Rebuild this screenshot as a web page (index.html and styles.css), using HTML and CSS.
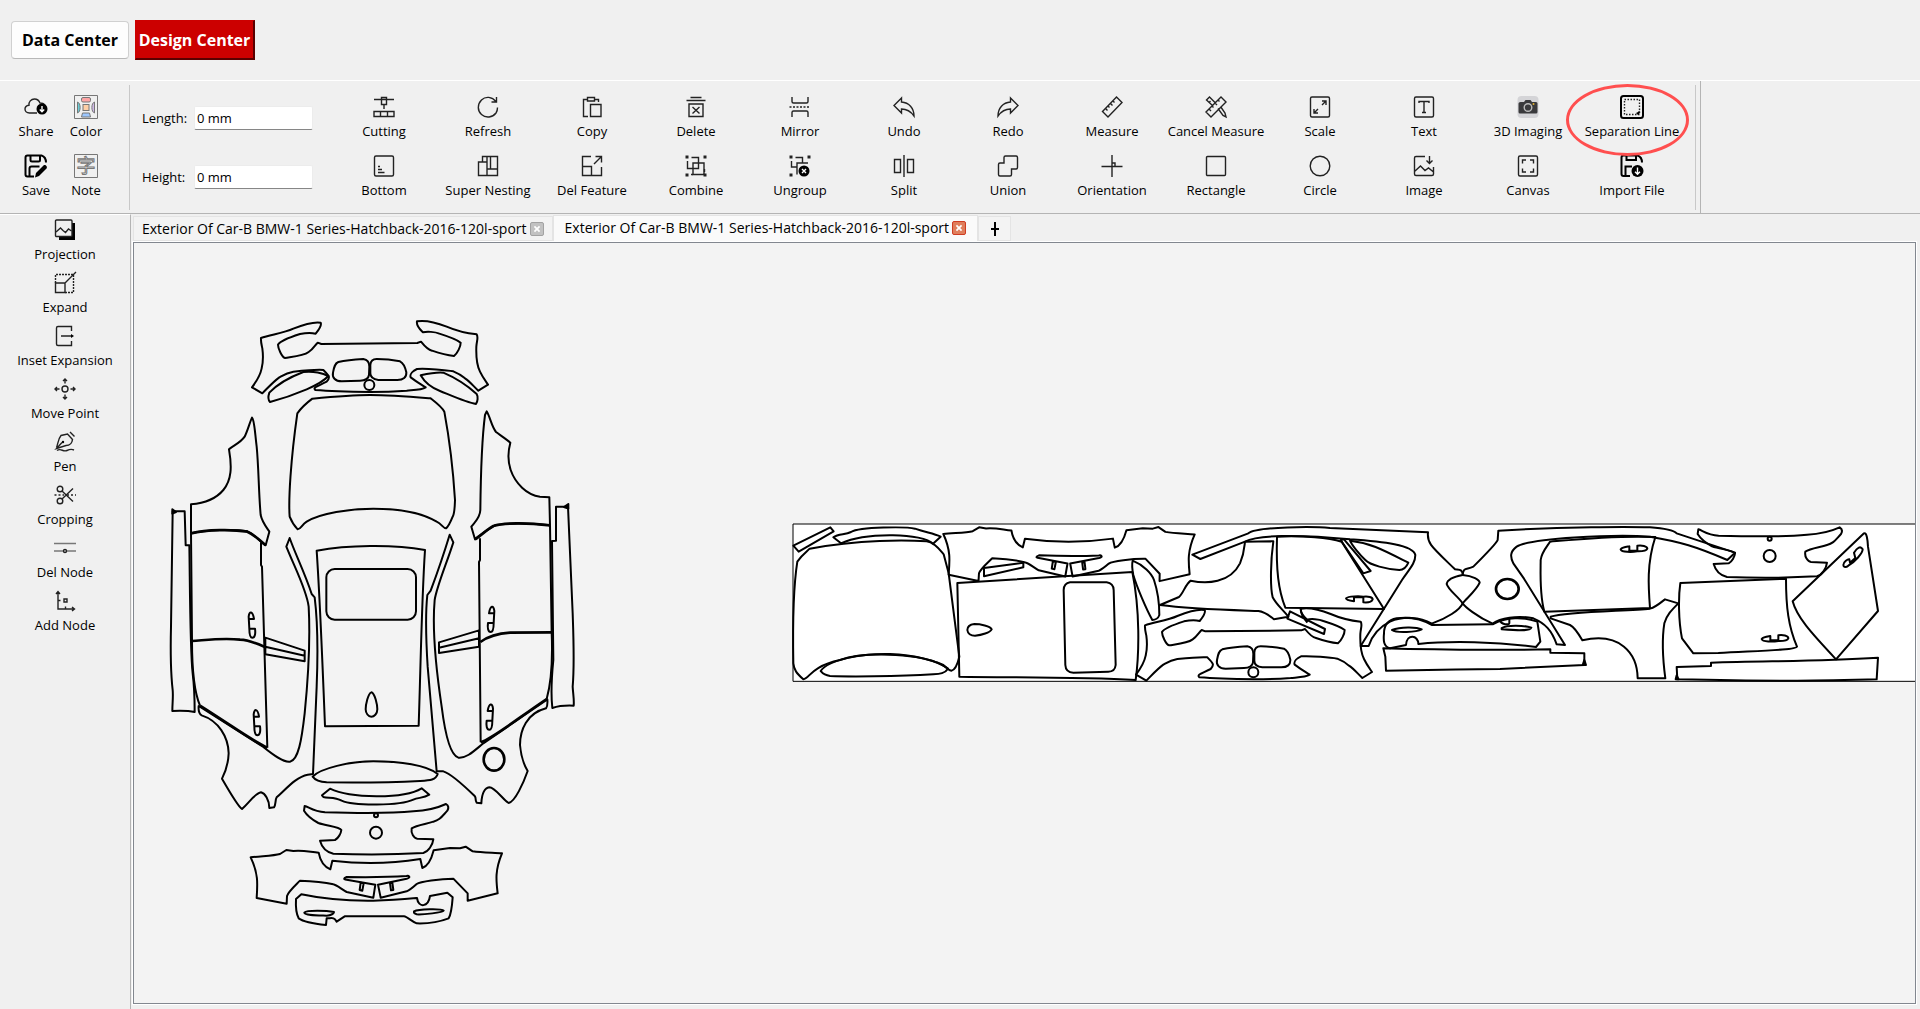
FILE: index.html
```html
<!DOCTYPE html>
<html lang="en">

<head>
    <meta charset="UTF-8">
    <meta name="viewport" content="width=device-width, initial-scale=1.0">
    <title>Design Center</title>
    <link rel="stylesheet" href="styles.css">
</head>

<body>
    <!-- Icon sprite -->
    <svg class="sprite" aria-hidden="true">
        <symbol id="i-share" viewBox="0 0 24 24"><path d="M13 18H5.5C2.500 18 1 16 1 14C1 12 2.500 10.500 5 10.200C4.500 7 7 4 10.500 4C13.500 4 15 5.500 16 8C18.500 8 20.500 9 21.500 11"/><circle cx="18" cy="14" r="5.500" class="solid"/><path class="inv" d="M18 11V16.500M15.800 14.500L18 16.700L20.200 14.500"/></symbol>
        <symbol id="i-color" viewBox="0 0 24 24"><g class="thin"><path stroke="#777" d="M.5 .5H23.500V23.500H.5Z"/><rect x="7.500" y="2.500" width="9" height="4.500" rx="1.500" fill="#ffa5a5"/><rect x="9" y="9.500" width="6" height="6" fill="#ffcfa6"/><path fill="#9cc7ff" d="M8.500 18H15.500L16.500 22H7.500Z"/><path fill="#69cbd4" d="M3.500 7C7 8 7 17 3.500 18Z"/><path fill="#d0b9e8" d="M20.500 7C17 8 17 17 20.500 18Z"/></g></symbol>
        <symbol id="i-save" viewBox="0 0 24 24"><g class="bold"><path d="M10 22.500H3.500C2 22.500 1.500 22 1.500 20.500V3.500C1.500 2 2 1.500 3.500 1.500H17.500C20.500 2.500 22 5 22 8.500M6.500 2V6C6.500 7 7 7.500 8 7.500H14.500C15.500 7.500 16 7 16 6V2M5.500 22V14.500C5.500 13 6 12.500 7.500 12.500H15.500"/></g><path class="solid" d="M12 19L19.500 11.500C21 10 24 12.500 22.500 14.500L15 22L11 23.500Z"/></symbol>
        <symbol id="i-cutting" viewBox="0 0 24 24"><path d="M2 4.500H22M9.500 2.500H14.500V9.500H9.500ZM12 9.500V14M2 16.500H22V21.500H2ZM8.500 16.500V21.500M15.500 16.500V21.500"/></symbol>
        <symbol id="i-refresh" viewBox="0 0 24 24"><path d="M20 6.500C16 1.500 9.500 1 5.500 5C1 9.500 1.500 16 5.500 19.500C10 23.500 16.500 22.500 20 18C21 16.500 21.500 14.500 21.500 12.500M20.500 2V7H15.500"/></symbol>
        <symbol id="i-copy" viewBox="0 0 24 24"><path d="M8 21.500H3.500V4.500H7.500M7.500 2.500H14.500V6H7.500ZM14.500 4.500H18.500V7M10.500 9.500H21V21.500H10.500Z"/></symbol>
        <symbol id="i-delete" viewBox="0 0 24 24"><path d="M6.500 2.500H17.500M2.500 5.500H21.500M5 9H19V21.500H5ZM8.500 12L15.500 18.500M15.500 12L8.500 18.500"/></symbol>
        <symbol id="i-mirror" viewBox="0 0 24 24"><path d="M4 2V6.500Q4 8 5.500 8H18.500Q20 8 20 6.500V2M4 22V17.500Q4 16 5.500 16H18.500Q20 16 20 17.500V22"/><path stroke-dasharray="2 1.500" d="M1.500 12H22.500"/></symbol>
        <symbol id="i-undo" viewBox="0 0 24 24"><path d="M9.500 3L2 10.500L9.500 18V14C14.500 14 18.500 16 22 21C22 13 17 7.500 9.500 7Z"/></symbol>
        <symbol id="i-redo" viewBox="0 0 24 24"><path d="M14.500 3L22 10.500L14.500 18V14C9.500 14 5.500 16 2 21C2 13 7 7.500 14.500 7Z"/></symbol>
        <symbol id="i-measure" viewBox="0 0 24 24"><path d="M16.500 2L22 7.500L8 22L2.500 16.500ZM5.500 13.500L7.500 15.500M8 11L9.500 12.500M10.500 8.500L12.500 10.500M13 6L14.500 7.500"/></symbol>
        <symbol id="i-cancel" viewBox="0 0 24 24"><path d="M17 2L22 7L7 22L2 17ZM5 14L7 16M8 11L9.500 12.500M11 8L13 10M14 5L15.500 6.500M8.500 10.500L2.500 5L5.500 2L11 7.500M5 7.500L6.500 6M14 13.500L19 20.500L22 22L21 18L16.500 11.500"/></symbol>
        <symbol id="i-scale" viewBox="0 0 24 24"><rect x="2.500" y="2" width="19" height="20" rx="1.500"/><path d="M14 6H18V10M18 6L14 10M10 18H6V14M6 18L10 14"/></symbol>
        <symbol id="i-text" viewBox="0 0 24 24"><rect x="2.500" y="2" width="19" height="20" rx="1.500"/><path d="M7 8V6.500H17V8M12 6.500V17.500M10 17.500H14"/></symbol>
        <symbol id="i-camera" viewBox="0 0 24 24"><rect x="1.500" y="1" width="21" height="22" rx="4" fill="#d4d4d7" stroke="none"/><path fill="#3a3a3c" stroke="none" d="M4.500 7H8L9.500 5H14.500L16 7H20Q21.500 7 21.500 8.500V17Q21.500 18.500 20 18.500H4Q2.500 18.500 2.500 17V8.500Q2.500 7 4.500 7Z"/><circle cx="12" cy="12.500" r="3.800" stroke="#bbb"/><circle cx="17.500" cy="9" r="1" fill="#e0b030" stroke="none"/></symbol>
        <symbol id="i-separation" viewBox="0 0 24 24"><g class="bold"><rect x="1" y="1" width="22" height="22" rx="2.500"/></g><rect x="4.500" y="4.500" width="15" height="15" stroke-dasharray="1.500 1.500"/><path class="solid" d="M16 18L18 17L19.500 15.500V18.500L18 20Z"/></symbol>
        <symbol id="i-bottom" viewBox="0 0 24 24"><rect x="2.500" y="2" width="19" height="20" rx="1.500"/><path d="M6 12.500H8M6 15.500H10M6 18.500H12.500"/></symbol>
        <symbol id="i-nesting" viewBox="0 0 24 24"><path d="M2.500 8H11V21.500H2.500ZM6.500 8V2.500H21.500V21.500H11M11 8V2.500M14.500 2.500V15M11 15H21.500"/></symbol>
        <symbol id="i-feature" viewBox="0 0 24 24"><path d="M11 2.500H2.500V21.500H21.500V13M2.500 12.500H11.500V21.500M14 10L21.500 2.500M15.500 2.500H21.500V8.500"/></symbol>
        <symbol id="i-combine" viewBox="0 0 24 24"><path d="M3.500 7V14.500H14.500V3.500H7.500M9 9H20V20.500H9Z"/><path stroke-width="3" d="M1.500 3H4.500M19.500 3H22.500M1.500 21H4.500M19.500 21H22.500"/><path d="M20.500 15V18M7 20.500H9"/></symbol>
        <symbol id="i-ungroup" viewBox="0 0 24 24"><path d="M3.500 7V13H9M7.500 3.500H14.500V9M9 20.500V9H20"/><path stroke-width="3" d="M1.500 3H4.500M19.500 3H22.500M1.500 21H4.500"/><circle class="solid" cx="16" cy="17" r="5.500"/><path class="inv" d="M14 15L18 19M18 15L14 19"/></symbol>
        <symbol id="i-split" viewBox="0 0 24 24"><path d="M12 1V23M2.500 5.500H8.500V18.500H2.500ZM15.500 5.500H21.500V18.500H15.500Z"/></symbol>
        <symbol id="i-union" viewBox="0 0 24 24"><path d="M9.500 2H20Q21.500 2 21.500 3.500V13.500Q21.500 15 20 15H15.500V20.500Q15.500 22 14 22H4Q2.500 22 2.500 20.500V10.500Q2.500 9 4 9H8V3.500Q8 2 9.500 2Z"/></symbol>
        <symbol id="i-orientation" viewBox="0 0 24 24"><path d="M12 1V23M1.500 12.500H22.500M12 9H15V12.500"/></symbol>
        <symbol id="i-rectangle" viewBox="0 0 24 24"><rect x="2.500" y="2.500" width="19" height="19" rx="1"/></symbol>
        <symbol id="i-circle" viewBox="0 0 24 24"><circle cx="12" cy="12" r="9.800"/></symbol>
        <symbol id="i-image" viewBox="0 0 24 24"><path d="M13 2.500H4Q2.500 2.500 2.500 4V20Q2.500 21.500 4 21.500H20Q21.500 21.500 21.500 20V13M2.500 17.500L8.500 12L13 16.500L16.500 14L21.500 18M17.500 2V9.500M14.500 6.500L17.500 9.500L20.500 6.500"/></symbol>
        <symbol id="i-canvas" viewBox="0 0 24 24"><rect x="2.500" y="2" width="19" height="20" rx="1.500"/><path d="M6.500 9.500V6H10M14 6H17.500V9.500M17.500 14.500V18H14M10 18H6.500V14.500"/></symbol>
        <symbol id="i-import" viewBox="0 0 24 24"><g class="bold"><path d="M10 22H3.500C2 22 1.500 21.500 1.500 20V3.500C1.500 2 2 1.500 3.500 1.500H17.500C20.500 2.500 22 5 22 8.500M6.500 2V6H16V2M5.500 22V12.500H12"/></g><circle class="solid" cx="17.500" cy="17" r="6"/><path class="inv" d="M17.500 13.500V20M15 17.800L17.500 20.200L20 17.800"/></symbol>
        <symbol id="i-projection" viewBox="0 0 24 24"><path class="solid" d="M6 5H22V22H6Z"/><rect x="2.500" y="2" width="16.500" height="16.500" rx="1" fill="#f0f0f0"/><path d="M3 14L7.500 10L10 12.500L12.500 14.500L15.500 11L18.500 13"/></symbol>
        <symbol id="i-expand" viewBox="0 0 24 24"><path d="M2.500 12H12V21.500H2.500ZM12 12L23 1"/><path stroke-dasharray="2 1" d="M2.500 12V3.500H20.500V21.500H12"/></symbol>
        <symbol id="i-inset" viewBox="0 0 24 24"><path d="M18.500 7V2.500H5Q3.500 2.500 3.500 4V20Q3.500 21.500 5 21.500H18.500V17M8 12H19"/><path class="solid" d="M18 10L21 12L18 14Z"/></symbol>
        <symbol id="i-move" viewBox="0 0 24 24"><circle cx="12" cy="12" r="3"/><path d="M12 2.500V6.500M12 17.500V21.500M2.500 12H6.500M17.500 12H21.500M10 4L12 2L14 4M10 20L12 22L14 20M4 10L2 12L4 14M20 10L22 12L20 14"/></symbol>
        <symbol id="i-pen" viewBox="0 0 24 24"><path d="M3.500 17.500C5 14 5 9 8 5.500L14.500 4L19.500 9.500C19 14 17 15.500 13 15.500L3.500 18.500L9 12.500M17 2L21.500 6.500M4 20.500C8 17.500 10 22.500 14 20.500C17 19 19 19 21 20"/><circle class="solid" cx="10" cy="12" r="1.200"/></symbol>
        <symbol id="i-cropping" viewBox="0 0 24 24"><circle cx="7" cy="6" r="2.800"/><circle cx="7" cy="18" r="2.800"/><path d="M9 8L20 18.500M9 16L20 5.500"/><path stroke-dasharray="2 2" d="M1.500 12H11M14 12H23"/></symbol>
        <symbol id="i-delnode" viewBox="0 0 24 24"><path stroke="#777" d="M1 7.500H23M1 15H10.500M13.500 15H23"/><circle cx="12" cy="15" r="1.500"/></symbol>
        <symbol id="i-addnode" viewBox="0 0 24 24"><path d="M5 3V20H21M3 5L5 2.500L7 5M19 18L21.500 20L19 22M11 10H14V13H11ZM5 11.500H7.500M12.500 20V17.500"/></symbol>
    </svg>

    <header class="main-nav">
        <button type="button" class="nav-btn">Data Center</button>
        <button type="button" class="nav-btn active">Design Center</button>
    </header>

    <div class="toolbar">
        <div class="tools file-tools">
            <button type="button" class="tool"><svg><use href="#i-share"/></svg>Share</button>
            <button type="button" class="tool"><svg><use href="#i-color"/></svg>Color</button>
            <button type="button" class="tool"><svg><use href="#i-save"/></svg>Save</button>
            <button type="button" class="tool"><svg viewBox="0 0 24 24"><path class="thin" d="M.5 .5H23.500V23.500H.5Z"/><text x="12" y="19" text-anchor="middle" class="note-char">字</text></svg>Note</button>
        </div>
        <form class="size-form">
            <label for="length">Length:</label>
            <input type="text" id="length" value="0 mm">
            <label for="height">Height:</label>
            <input type="text" id="height" value="0 mm">
        </form>
        <div class="tools edit-tools">
            <button type="button" class="tool"><svg><use href="#i-cutting"/></svg>Cutting</button>
            <button type="button" class="tool"><svg><use href="#i-refresh"/></svg>Refresh</button>
            <button type="button" class="tool"><svg><use href="#i-copy"/></svg>Copy</button>
            <button type="button" class="tool"><svg><use href="#i-delete"/></svg>Delete</button>
            <button type="button" class="tool"><svg><use href="#i-mirror"/></svg>Mirror</button>
            <button type="button" class="tool"><svg><use href="#i-undo"/></svg>Undo</button>
            <button type="button" class="tool"><svg><use href="#i-redo"/></svg>Redo</button>
            <button type="button" class="tool"><svg><use href="#i-measure"/></svg>Measure</button>
            <button type="button" class="tool"><svg><use href="#i-cancel"/></svg>Cancel Measure</button>
            <button type="button" class="tool"><svg><use href="#i-scale"/></svg>Scale</button>
            <button type="button" class="tool"><svg><use href="#i-text"/></svg>Text</button>
            <button type="button" class="tool"><svg><use href="#i-camera"/></svg>3D Imaging</button>
            <button type="button" class="tool circled"><svg><use href="#i-separation"/></svg>Separation Line</button>
            <button type="button" class="tool"><svg><use href="#i-bottom"/></svg>Bottom</button>
            <button type="button" class="tool"><svg><use href="#i-nesting"/></svg>Super Nesting</button>
            <button type="button" class="tool"><svg><use href="#i-feature"/></svg>Del Feature</button>
            <button type="button" class="tool"><svg><use href="#i-combine"/></svg>Combine</button>
            <button type="button" class="tool"><svg><use href="#i-ungroup"/></svg>Ungroup</button>
            <button type="button" class="tool"><svg><use href="#i-split"/></svg>Split</button>
            <button type="button" class="tool"><svg><use href="#i-union"/></svg>Union</button>
            <button type="button" class="tool"><svg><use href="#i-orientation"/></svg>Orientation</button>
            <button type="button" class="tool"><svg><use href="#i-rectangle"/></svg>Rectangle</button>
            <button type="button" class="tool"><svg><use href="#i-circle"/></svg>Circle</button>
            <button type="button" class="tool"><svg><use href="#i-image"/></svg>Image</button>
            <button type="button" class="tool"><svg><use href="#i-canvas"/></svg>Canvas</button>
            <button type="button" class="tool"><svg><use href="#i-import"/></svg>Import File</button>
        </div>
    </div>

    <div class="workspace">
        <aside class="sidebar">
            <button type="button" class="tool"><svg><use href="#i-projection"/></svg>Projection</button>
            <button type="button" class="tool"><svg><use href="#i-expand"/></svg>Expand</button>
            <button type="button" class="tool"><svg><use href="#i-inset"/></svg>Inset Expansion</button>
            <button type="button" class="tool"><svg><use href="#i-move"/></svg>Move Point</button>
            <button type="button" class="tool"><svg><use href="#i-pen"/></svg>Pen</button>
            <button type="button" class="tool"><svg><use href="#i-cropping"/></svg>Cropping</button>
            <button type="button" class="tool"><svg><use href="#i-delnode"/></svg>Del Node</button>
            <button type="button" class="tool"><svg><use href="#i-addnode"/></svg>Add Node</button>
        </aside>

        <main class="editor">
            <div class="tabs">
                <div class="tab">
                    <button type="button" class="tab-name">Exterior Of Car-B BMW-1 Series-Hatchback-2016-120l-sport</button>
                    <button type="button" class="tab-close" aria-label="Close tab"><svg viewBox="0 0 14 14"><path d="M4 4L10 10M10 4L4 10"/></svg></button>
                </div>
                <div class="tab active">
                    <button type="button" class="tab-name">Exterior Of Car-B BMW-1 Series-Hatchback-2016-120l-sport</button>
                    <button type="button" class="tab-close" aria-label="Close tab"><svg viewBox="0 0 14 14"><path d="M4 4L10 10M10 4L4 10"/></svg></button>
                </div>
                <button type="button" class="tab-add" aria-label="New tab"><svg viewBox="0 0 14 16"><path d="M7 1V15M3 8H11"/></svg></button>
            </div>

            <div class="canvas">
                <!-- Car layout -->
                <svg class="plan" viewBox="0 0 1320 1920">
                    <g id="front-bumper">
                        <path d="M303 114C330 104 370 100 400 86C430 74 460 64 482 68C486 76 476 90 467 101C455 98 430 100 420 102C395 110 360 122 354 134C354 145 366 172 375 174C400 170 430 168 446 156C460 147 465 135 473 128L484 132L772 129L783 125C795 140 805 150 816 152C840 160 865 166 882 168C892 160 902 140 902 128C890 118 860 108 838 101C825 95 800 94 789 97C780 88 768 78 771 64C795 60 830 68 860 80C890 93 920 100 950 103C956 112 950 122 949 140C948 170 950 195 960 215C968 232 978 245 984 254L955 272C940 258 930 245 915 235C900 222 890 218 880 214C860 210 800 205 771 207C760 212 748 222 752 232C765 242 785 254 797 262C785 270 760 270 740 272C700 275 670 276 630 276C570 275 520 274 466 270C458 262 470 260 500 245C512 232 508 228 490 210C470 208 430 212 400 215C380 218 370 225 358 232C340 245 325 262 307 280L276 262C285 250 300 230 305 205C311 180 309 160 307 145C305 135 302 125 303 114Z"/>
                        <path d="M535 186C560 180 590 178 610 177C624 179 628 186 628 200L627 225C625 238 615 242 600 242L545 244C525 244 516 232 519 218C522 203 524 190 535 186Z"/>
                        <path d="M650 177C680 177 705 181 720 184C732 190 736 203 739 217C740 232 730 240 712 240L655 240C638 238 631 232 631 220V195C632 182 638 177 650 177Z"/>
                        <circle cx="628" cy="255" r="15"/>
                    </g>
                    <path d="M328 278C345 260 380 235 430 216C460 212 490 220 505 228C490 245 470 255 440 268C400 285 360 298 330 306C324 300 324 290 328 278Z"/>
                    <path d="M782 226C800 222 830 216 850 218C890 235 920 255 950 282C955 290 953 305 948 312C920 308 870 285 840 273C810 262 790 240 782 226Z"/>
                    <path d="M457 296C520 290 580 285 630 285C690 285 750 290 812 295C825 305 845 320 853 335C865 400 880 520 885 600C884 630 884 640 878 650C872 665 865 680 858 685C850 685 845 672 830 665C780 635 700 626 640 626C570 626 480 640 440 665C425 675 422 688 413 688C405 680 395 665 389 650C385 600 392 480 412 340C425 322 445 305 457 296Z"/>
                    <path d="M276 353C283 358 284 390 290 440C296 500 296 580 302 645C306 665 318 680 328 695L317 736C300 725 280 700 262 694C220 686 140 690 93 700V613C130 610 165 600 190 570C215 540 216 500 207 448C220 436 240 430 254 410C262 395 270 365 276 353Z"/>
                    <path d="M980 334C990 350 995 380 1008 396C1020 405 1040 418 1051 428C1045 450 1042 480 1052 510C1066 550 1100 585 1140 590L1168 592L1170 676C1110 668 1040 670 1005 676C980 690 960 705 945 718L934 680C945 665 960 655 961 630C962 540 964 430 975 345Z"/>

                    <g transform="translate(0 600)">
                        <path d="M38 34H74L77 136H88C90 250 90 450 98 520C103 560 104 600 104 636C85 632 60 632 37 633C37 610 40 590 38 570C30 500 32 420 33 380Z"/>
                        <path d="M1224 20H1188V122L1176 123L1180 480C1175 530 1172 580 1177 624C1195 618 1220 616 1241 617C1243 600 1239 580 1238 560C1244 490 1240 400 1238 340Z"/>
                        <path class="fill" d="M37 28L48 36L37 41ZM1225 12L1212 21L1225 26Z"/>
                        <path class="heavy" d="M93 100C140 88 220 88 262 95C280 103 300 120 317 136M96 423C140 420 190 413 240 419C260 420 290 430 313 440M120 617C220 680 280 725 322 743M1170 76C1100 68 1030 68 1000 78C985 85 965 105 945 118M961 426C990 405 1020 400 1050 398L1175 397M962 727C1000 715 1080 650 1160 597"/>
                        <path d="M93 100L96 423C96 500 100 570 120 617M303 127V195L306 200L322 743M1170 76L1175 397C1178 470 1176 540 1160 597M960 115V180L957 186L962 727"/>
                        <g id="handle"><path d="M268 386L266 350C268 332 278 332 282 357H266M268 386H285C287 400 285 413 277 413C269 413 268 400 268 386Z"/></g>
                        <use href="#handle" x="15" y="293"/>
                        <use href="#handle" transform="translate(1269 -17) scale(-1 1)"/>
                        <use href="#handle" transform="translate(1265 276) scale(-1 1)"/>
                        <path d="M316 413L434 452V484L316 463ZM316 440L434 467M957 391L837 427V459L957 440ZM837 443L957 415"/>
                        <path d="M389 114L379 140C405 205 440 270 446 320C452 430 442 560 434 640C425 720 415 780 390 785C370 788 340 765 310 741L116 618C115 630 117 642 125 646C175 662 205 710 206 760C205 790 198 812 186 836C220 895 235 920 246 927C270 905 285 880 303 877C315 880 328 900 328 924L342 922C348 915 345 900 350 892C380 865 410 830 443 824L459 822L470 560C474 460 475 380 464 292L455 282C435 220 405 160 389 114Z"/>
                        <path d="M869 104L880 127C860 190 830 260 824 300C815 400 830 520 845 620C855 700 870 765 895 773C920 776 945 750 970 730L1162 598C1163 610 1162 620 1158 625C1100 640 1080 690 1080 735C1083 770 1092 795 1103 813C1090 850 1065 905 1046 909C1030 900 1005 862 988 862C970 865 965 890 964 910L950 908C944 900 950 895 944 888C910 855 870 820 850 814H830L803 500C798 420 796 340 802 285L812 272C835 210 855 150 869 104Z"/>
                        <ellipse class="heavy" cx="1002" cy="778" rx="31" ry="34"/>
                        <path d="M470 152C560 135 700 132 795 150C785 300 782 500 776 677L495 679C488 500 480 300 470 152Z"/>
                        <rect x="499" y="207" width="269" height="152" rx="25"/>
                        <path d="M634 577C645 580 652 615 652 628C652 642 642 650 634 650C625 650 617 640 617 628C617 615 624 580 634 577Z"/>
                    </g>

                    <g transform="translate(0 1200)">
                        <path d="M458 230C480 205 570 184 640 184C720 184 800 195 833 222C828 240 810 241 780 243C700 247 580 248 500 247C475 246 465 240 458 230Z"/>
                        <path d="M486 286L510 266C570 295 730 298 785 265L808 284C790 295 775 292 760 299C720 318 580 318 545 302C525 290 505 295 490 291Z"/>
                        <g id="tailgate">
                            <path d="M434 318C445 320 460 335 495 337C600 340 700 340 760 334C800 332 830 325 858 312C868 318 866 325 862 332C845 350 840 360 820 365C800 372 770 375 755 385C752 400 762 415 772 416L820 418C818 435 805 455 790 459C700 464 600 464 520 461C495 455 485 440 480 422L525 420C535 415 543 400 544 390C538 380 500 378 475 369C455 358 440 345 432 332Z"/>
                            <circle cx="648" cy="398" r="18"/>
                            <circle cx="648" cy="346" r="6"/>
                        </g>
                        <g id="rear-bumper">
                            <path d="M272 472C300 468 340 468 360 462L379 450L400 453C430 450 450 456 476 458C480 480 492 500 511 508L517 482C600 492 700 490 781 477L787 504C805 498 815 475 821 451L870 444L900 445L917 440L938 454C965 458 1000 458 1026 460C1005 510 1008 540 1013 580L923 602V580L880 536C840 536 780 545 770 552C750 570 745 572 740 574L662 593L654 554L740 536C755 532 745 526 740 528C680 532 620 532 560 531C550 535 550 538 560 539L646 554L640 593L560 576C545 568 530 555 520 553C490 546 450 543 420 542C400 562 385 575 381 588L380 611L290 594C293 550 295 520 272 472Z"/>
                            <path d="M602 548L599 570L607 572L611 550ZM690 550L693 571L700 570L697 548Z"/>
                        </g>
                        <path d="M408 597L424 583C480 595 560 603 640 602C700 601 740 597 771 594C775 625 805 622 810 588L862 578L878 592C876 620 872 645 866 655C840 665 800 671 770 670C755 665 742 650 732 649H554L530 665C522 650 515 655 500 655L498 675C470 672 430 665 416 655C408 640 407 615 408 597Z"/>
                        <path d="M433 638C440 630 500 632 522 636C520 645 510 646 500 647C470 646 435 646 433 638ZM762 634C775 627 845 625 851 632C848 638 790 644 770 643C762 641 761 638 762 634Z"/>
                    </g>
                </svg>

                <!-- Nested parts on the film roll -->
                <svg class="sheet" viewBox="0 0 3600 555">
                    <rect class="film" x="39" y="42" width="3600" height="472"/>
                    <path d="M40 107L151 52L161 64L56 125Z"/>
                    <path d="M160 82C175 70 195 75 213 66C240 50 380 50 405 56C440 68 460 70 482 80L459 101C430 70 260 65 183 100Z"/>
                    <path d="M89 116C240 88 380 90 440 94C465 98 480 120 491 133L506 190L538 440C532 465 525 480 514 482C500 480 500 465 470 457C400 430 250 425 180 450C90 470 90 505 70 508C50 490 42 480 40 460C38 350 40 230 52 155C65 135 80 125 89 116Z"/>
                    <path d="M122 483C145 450 240 430 330 432C400 435 470 450 504 476C495 490 480 492 460 493C350 500 200 500 150 498C130 495 128 490 122 483Z"/>
                    <use href="#rear-bumper" transform="translate(218 -400) rotate(1 272 472)"/>
                    <path d="M612 174L730 158V172L612 199Z"/>
                    <path d="M532 219L1057 186C1080 300 1078 430 1067 510C900 500 700 503 538 500Z"/>
                    <path d="M870 217H980Q1000 220 1001 240L1007 465Q1005 485 985 485L880 488Q857 487 856 465L851 240Q852 220 870 217Z"/>
                    <path d="M635 358C632 348 600 342 583 342C568 344 562 352 562 360C563 370 572 377 585 377C605 375 630 368 635 358Z"/>
                    <path d="M1058 152C1090 165 1115 190 1122 210C1132 240 1138 280 1138 315C1135 325 1125 330 1117 330C1100 300 1070 230 1060 195C1056 175 1056 160 1058 152Z"/>
                    <use href="#front-bumper" transform="translate(792 232)"/>
                    <use href="#tailgate" transform="translate(2321 -260)"/>

                    <g transform="translate(1050 0)">
                        <path d="M90 285L147 261C160 250 165 225 182 212C230 222 300 220 330 160C343 130 343 110 345 95L430 94C422 150 420 230 428 262C440 285 455 295 475 320L432 328C420 318 405 305 385 303C300 300 180 297 90 285Z"/>
                        <path d="M187 134L355 70C380 48 560 50 600 54L894 67C890 100 905 110 975 178C990 180 998 178 998 195C1030 198 1048 210 1049 218C1040 240 1010 265 998 280C990 300 950 325 905 341C870 320 820 318 780 335C740 355 725 380 716 408H692L816 210C840 175 856 160 856 135C850 105 760 95 660 88C500 72 380 75 345 95L211 147Z"/>
                        <path d="M1105 62C1300 50 1500 50 1560 52C1600 55 1630 60 1640 70L1815 128L1792 150C1700 110 1650 95 1560 80C1450 72 1200 85 1160 110C1140 125 1140 140 1150 160L1182 206L1305 405L1280 403C1265 360 1245 340 1210 325C1160 315 1110 325 1088 341C1040 320 1005 290 998 280C985 260 955 240 950 222C952 210 970 200 998 195C1000 170 1010 180 1030 170C1070 130 1100 100 1103 90Z"/>
                        <ellipse class="heavy" cx="1132" cy="237" rx="34" ry="30"/>
                        <path d="M441 80C520 75 600 85 635 95L762 297L466 293C445 240 438 180 441 80Z"/>
                        <path d="M632 90L642 88L722 183L700 190Z"/>
                        <path d="M660 92C720 98 760 120 835 158C830 170 820 180 808 180C770 178 720 165 706 150C690 135 665 105 660 92Z"/>
                        <path d="M648 265C655 258 690 258 700 260C715 258 728 262 728 268C724 278 710 278 700 277V262H672V274C655 272 648 270 648 265Z"/>
                        <path d="M512 297C512 315 525 330 532 338M480 304L585 357L582 372L472 326Z"/>
                        <path d="M762 370C762 345 775 330 800 325C850 318 880 330 905 345L1088 343C1130 320 1180 320 1222 335L1231 395L1218 411C1100 395 960 392 865 402C865 375 830 370 828 405L780 415C760 410 760 390 762 370Z"/>
                        <path d="M786 360C810 350 860 350 875 358C860 366 800 370 786 360ZM1115 354C1130 345 1180 345 1204 353C1200 362 1180 363 1115 358ZM1110 330C1112 345 1138 345 1138 340V322"/>
                        <path d="M760 415C860 418 1000 422 1261 418V428L1363 430V465L1110 477C1000 478 850 480 768 482L766 440Z"/>
                        <path class="fill" d="M1363 450L1358 465H1368Z"/>
                    </g>

                    <g transform="translate(2160 0)">
                        <path d="M150 95C230 88 350 76 466 81C440 160 445 230 450 294L133 305C118 250 122 180 122 150C125 125 145 105 150 95Z"/>
                        <g id="handle-flat"><path d="M362 118C368 110 385 110 388 109V122H412V107C425 105 442 108 442 116C438 125 425 124 412 124C395 127 365 127 362 118Z"/></g>
                        <use href="#handle-flat" x="423" y="269"/>
                        <path d="M152 320C200 305 380 303 450 296C470 290 485 275 495 268L535 280C515 300 500 315 493 340C485 390 490 460 496 505H413C412 430 360 365 247 391C235 370 220 350 210 345L152 325Z"/>
                        <path d="M541 219L858 206C858 290 865 350 891 410C888 420 780 422 655 429L580 430L546 385C535 330 535 260 541 219Z"/>
                        <path d="M1092 70C1100 66 1103 90 1104 110L1134 303L1008 448C930 365 890 320 878 274Z"/>
                        <path d="M1030 165C1030 155 1044 147 1048 148L1050 158L1066 144L1062 128C1072 112 1082 107 1088 118C1088 130 1065 155 1045 167C1038 173 1030 172 1030 165Z"/>
                        <path d="M530 471L633 468V458C800 452 950 455 1134 443L1130 508C950 512 850 515 532 508Z"/>
                        <path class="fill" d="M530 496L527 508H536Z"/>
                    </g>
                </svg>
            </div>
        </main>
    </div>
</body>

</html>
```
FILE: styles.css
```css
* {
    box-sizing: border-box;
}

body {
    margin: 0;
    min-height: 100vh;
    display: flex;
    flex-direction: column;
    background: #f0f0f0;
    color: #000;
    font-family: 'Open Sans', 'Noto Sans', sans-serif;
    font-size: 13px;
    line-height: 18px;
}

button {
    margin: 0;
    padding: 0;
    border: none;
    background: none;
    color: inherit;
    font: inherit;
    cursor: pointer;
}

.sprite {
    position: absolute;
    width: 0;
    height: 0;
}

/* Top navigation */
.main-nav {
    display: flex;
    align-items: center;
    gap: 6px;
    height: 80px;
    padding: 0 11px;
}

.nav-btn {
    width: 118px;
    height: 38px;
    background: #fdfdfd;
    border: 1px solid #d0d0d0;
    border-bottom-color: #b8b8b8;
    border-radius: 4px;
    font-size: 16px;
    font-weight: bold;
    white-space: nowrap;
}

.nav-btn.active {
    width: 120px;
    height: 40px;
    background: #cc0000;
    border: 1px solid #cc0000;
    border-right: 2px solid #5a0000;
    border-bottom: 2px solid #5a0000;
    border-radius: 0;
    color: #fff;
}

/* Toolbar */
.toolbar {
    display: flex;
    padding: 4px 0 3px;
    border-top: 1px solid #fff;
    border-bottom: 1px solid #b4b4b4;
}

.tools {
    display: grid;
    grid-auto-rows: 59px;
    padding: 5px 0 2px;
}

.file-tools {
    grid-template-columns: repeat(2, 50px);
    width: 130px;
    padding-left: 11px;
    border-right: 1px solid #c8c8c8;
}

.edit-tools {
    grid-template-columns: repeat(13, 104px);
    margin-left: 19px;
    padding-right: 11px;
    border-right: 1px solid #c8c8c8;
    position: relative;
}

/* Full height divider at the end of the toolbar */
.edit-tools::after {
    content: "";
    position: absolute;
    top: -4px;
    bottom: -3px;
    right: -6px;
    width: 1px;
    background: #b4b4b4;
}

.tool {
    position: relative;
    display: flex;
    flex-direction: column;
    align-items: center;
    gap: 3px;
    padding-top: 5px;
    white-space: nowrap;
}

.tool svg {
    flex: none;
    width: 24px;
    height: 24px;
    fill: none;
    stroke: #222;
    stroke-width: 1.4;
}

.circled::after {
    content: "";
    position: absolute;
    z-index: 1;
    top: -6px;
    left: -14px;
    width: 117px;
    height: 66px;
    border: 3px solid #ff4f4f;
    border-radius: 50%;
}

.solid {
    fill: #000;
    stroke: none;
}

.inv {
    stroke: #fff;
}

.bold {
    stroke: #000;
    stroke-width: 2;
}

.thin {
    stroke: #777;
    stroke-width: 1;
}

.note-char {
    font-family: 'Noto Sans CJK SC', sans-serif;
    font-size: 19px;
    stroke: #777;
    stroke-width: 1;
}

.size-form {
    display: grid;
    grid-template-columns: 52px 119px;
    grid-auto-rows: 24px;
    row-gap: 35px;
    align-items: center;
    align-content: start;
    padding: 21px 0 0 12px;
}

.size-form input {
    width: 100%;
    height: 24px;
    padding: 0 2px;
    background: #fff;
    border: 1px solid #ececec;
    border-bottom: 1px solid #868686;
    border-radius: 2px;
    color: #000;
    font: inherit;
}

/* Workspace */
.workspace {
    flex: 1;
    display: flex;
    min-height: 0;
}

.sidebar {
    flex: none;
    display: grid;
    grid-auto-rows: 53px;
    align-content: start;
    width: 131px;
    border-top: 1px solid #fff;
    border-right: 1px solid #b4b4b4;
}

.sidebar .tool {
    padding-top: 3px;
}

.editor {
    flex: 1;
    display: flex;
    flex-direction: column;
    min-width: 0;
    padding: 1px 3px 3px 1px;
}

/* Tabs */
.tabs {
    display: flex;
    align-items: flex-start;
    height: 27px;
    padding-left: 1px;
    font-size: 14px;
}

.tab {
    display: flex;
    align-items: center;
    gap: 3px;
    height: 25px;
    margin-top: 1px;
    padding: 0 8px;
    background: #f3f3f3;
    border: 1px solid #e4e4e4;
    white-space: nowrap;
}

.tab.active {
    height: 27px;
    margin-top: 0;
    padding: 0 11px 2px;
    background: #fafafa;
    border-bottom: none;
}

.tab-close {
    width: 14px;
    height: 14px;
    background: #c2c2c2;
    border: 1px solid #a2a2a2;
    border-radius: 2px;
}

.tab.active .tab-close {
    background: #e07e5c;
    border-color: #cf3c22;
}

.tab-close svg {
    display: block;
    width: 12px;
    height: 12px;
    fill: none;
    stroke: #fff;
    stroke-width: 2;
}

.tab-add {
    width: 33px;
    height: 25px;
    margin-top: 1px;
    background: #f3f3f3;
    border: 1px solid #e4e4e4;
}

.tab-add svg {
    display: block;
    width: 14px;
    height: 16px;
    margin: 0 auto;
    fill: none;
    stroke: #000;
    stroke-width: 2;
}

/* Drawing canvas */
.canvas {
    flex: 1;
    position: relative;
    overflow: hidden;
    background: #f3f3f3;
    border: 1px solid #82878f;
    outline: 1px solid #fff;
    margin: 0 1px 2px;
}

.plan,
.sheet {
    position: absolute;
    fill: none;
    stroke: #000;
    stroke-width: 6;
    stroke-linejoin: round;
}

.plan {
    left: 26px;
    top: 57px;
    width: 440px;
    height: 640px;
}

.sheet {
    left: 646px;
    top: 267px;
    width: 1200px;
    height: 185px;
}

.film {
    fill: #fff;
    stroke-width: 3;
}

.heavy {
    stroke-width: 8;
}

.fill {
    fill: #000;
}
```
